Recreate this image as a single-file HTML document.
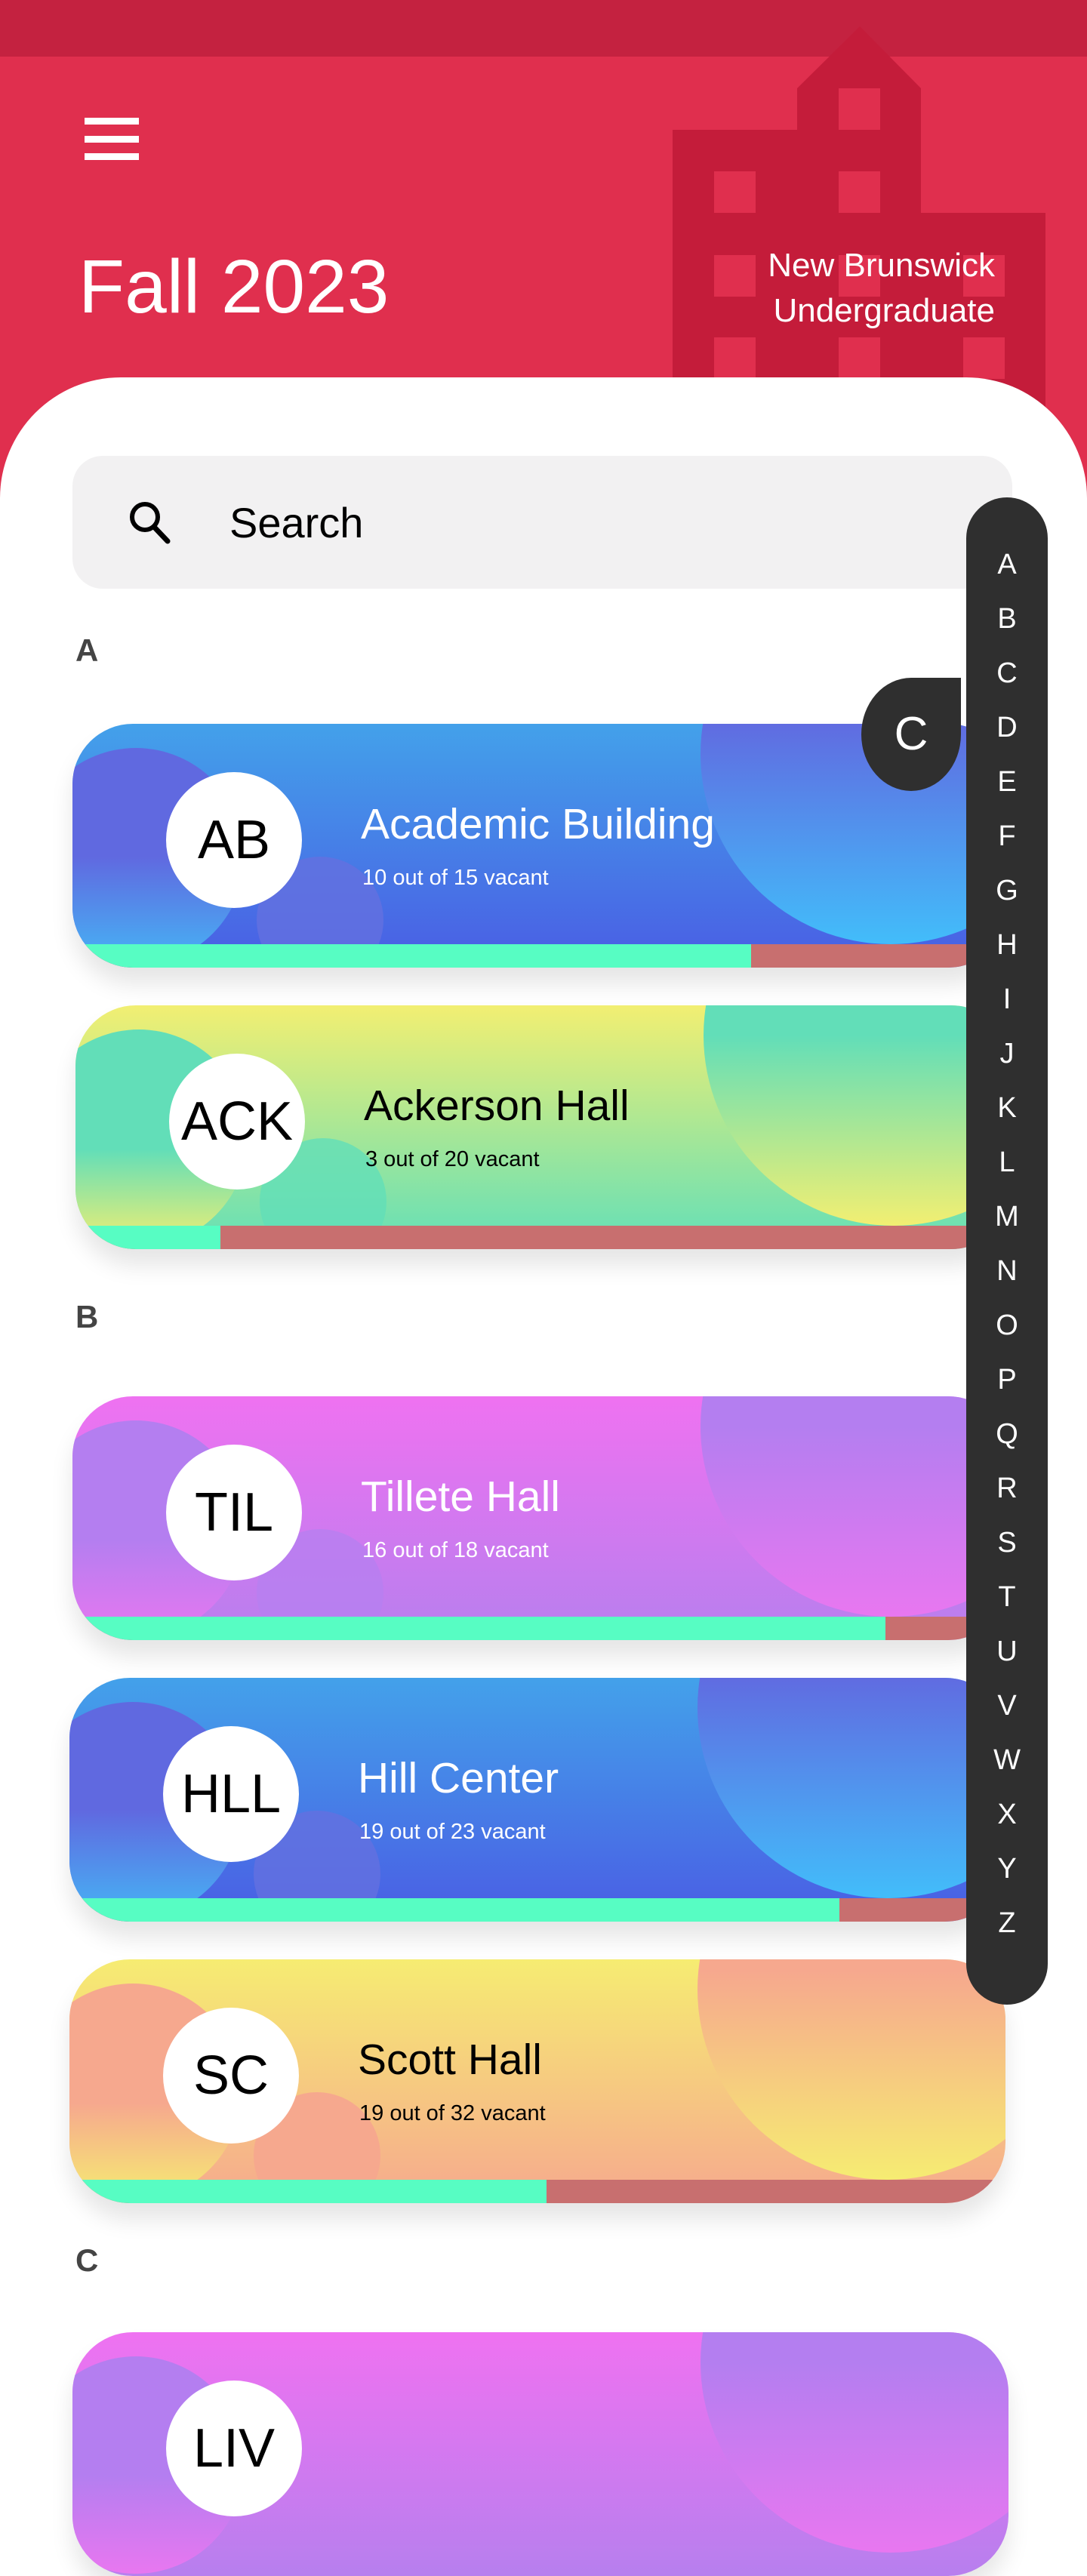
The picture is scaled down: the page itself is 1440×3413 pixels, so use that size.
<!DOCTYPE html>
<html><head><meta charset="utf-8">
<style>
*{margin:0;padding:0;box-sizing:border-box}
html,body{width:1440px;height:3200px;overflow:hidden;background:#fff;font-family:"Liberation Sans",sans-serif}
.abs{position:absolute}
.card{position:absolute;width:1240px;height:323px;border-radius:80px;overflow:hidden;box-shadow:0 22px 30px rgba(0,0,0,0.10)}
.card .c{position:absolute;border-radius:50%}
.card .bar{position:absolute;left:0;right:0;bottom:0;height:31px;background:#c86f6f}
.card .bar i{position:absolute;left:0;top:0;bottom:0;background:#57fdc3}
.av{position:absolute;width:180px;height:180px;border-radius:50%;background:#fff;left:124px;top:64px;text-align:center;line-height:180px;font-size:72px;color:#000}
.t{position:absolute;left:382px;top:100px;font-size:57px;white-space:nowrap}
.s{position:absolute;left:384px;top:188px;font-size:29px;white-space:nowrap}
.sec{position:absolute;left:100px;font-size:42px;font-weight:bold;color:#444}
.alpha{position:absolute;left:1280px;top:659px;width:108px;height:1997px;background:#2f2f2f;border-radius:54px}
.alpha span{position:absolute;left:0;width:108px;text-align:center;color:#fff;font-size:38px;line-height:40px}
</style></head><body>
<!-- header -->
<div class="abs" style="left:0;top:0;width:1440px;height:700px;background:#e02f4e"></div>
<div class="abs" style="left:0;top:0;width:1440px;height:75px;background:#c42240"></div>
<svg class="abs" style="left:0;top:0" width="1440" height="700">
<g fill="#c41c3a">
<polygon points="1056,117 1139,35 1220,117 1220,282 1385,282 1385,700 891,700 891,172 1056,172"/>
</g>
<g fill="#e02f4e">
<rect x="1111" y="117" width="55" height="55"/>
<rect x="946" y="227" width="55" height="55"/>
<rect x="1111" y="227" width="55" height="55"/>
<rect x="946" y="338" width="55" height="55"/>
<rect x="1111" y="338" width="55" height="55"/>
<rect x="1276" y="338" width="55" height="55"/>
<rect x="946" y="447" width="55" height="55"/>
<rect x="1111" y="447" width="55" height="55"/>
<rect x="1276" y="447" width="55" height="55"/>
</g>
<g fill="#fff">
<rect x="112" y="156" width="72" height="9"/>
<rect x="112" y="180" width="72" height="9"/>
<rect x="112" y="203" width="72" height="9"/>
</g>
</svg>
<div class="abs" style="left:104px;top:320px;font-size:100px;color:#fff;line-height:120px">Fall 2023</div>
<div class="abs" style="left:900px;top:322px;width:418px;text-align:right;font-size:44px;line-height:60px;color:#fff">New Brunswick<br>Undergraduate</div>
<!-- white sheet -->
<div class="abs" style="left:0;top:500px;width:1440px;height:2800px;background:#fff;border-radius:160px 160px 0 0"></div>
<!-- search -->
<div class="abs" style="left:96px;top:604px;width:1245px;height:176px;background:#f2f1f2;border-radius:40px"></div>
<svg class="abs" style="left:160px;top:655px" width="80" height="80"><circle cx="32" cy="30" r="17" fill="none" stroke="#000" stroke-width="6"/><line x1="44" y1="43" x2="62" y2="62" stroke="#000" stroke-width="7" stroke-linecap="round"/></svg>
<div class="abs" style="left:304px;top:660px;font-size:56px;color:#000">Search</div>

<div class="sec" style="top:838px">A</div>
<div class="sec" style="top:1721px">B</div>
<div class="sec" style="top:2971px">C</div>

<!-- card 1 -->
<div class="card" style="left:96px;top:959px;background:linear-gradient(#43a1ea,#4a5de4)">
<div class="c" style="left:832px;top:-212px;width:504px;height:504px;background:linear-gradient(#6169e0 40%,#42bdfa)"></div>
<div class="c" style="left:-60px;top:32px;width:288px;height:288px;background:linear-gradient(#6069e0 50%,#45b5f5)"></div>
<div class="c" style="left:244px;top:176px;width:168px;height:168px;background:#6470e0;opacity:.8"></div>
<div class="av">AB</div>
<div class="t" style="color:#fff">Academic Building</div>
<div class="s" style="color:#fff">10 out of 15 vacant</div>
<div class="bar"><i style="width:899px"></i></div>
</div>
<!-- card 2 -->
<div class="card" style="left:100px;top:1332px;background:linear-gradient(#f2ef72,#62dfb8)">
<div class="c" style="left:832px;top:-212px;width:504px;height:504px;background:linear-gradient(#62deb8 50%,#f2ef72)"></div>
<div class="c" style="left:-60px;top:32px;width:288px;height:288px;background:linear-gradient(#62deb8 55%,#f2ef72)"></div>
<div class="c" style="left:244px;top:176px;width:168px;height:168px;background:#62deb8;opacity:.8"></div>
<div class="av">ACK</div>
<div class="t" style="color:#000">Ackerson Hall</div>
<div class="s" style="color:#000">3 out of 20 vacant</div>
<div class="bar"><i style="width:192px"></i></div>
</div>
<!-- card 3 -->
<div class="card" style="left:96px;top:1850px;background:linear-gradient(#ef72f1,#b77fee)">
<div class="c" style="left:832px;top:-212px;width:504px;height:504px;background:linear-gradient(#b47ef0 50%,#e877f0)"></div>
<div class="c" style="left:-60px;top:32px;width:288px;height:288px;background:linear-gradient(#b47ef0 55%,#e877f0)"></div>
<div class="c" style="left:244px;top:176px;width:168px;height:168px;background:#b67ff0;opacity:.8"></div>
<div class="av">TIL</div>
<div class="t" style="color:#fff">Tillete Hall</div>
<div class="s" style="color:#fff">16 out of 18 vacant</div>
<div class="bar"><i style="width:1077px"></i></div>
</div>
<!-- card 4 -->
<div class="card" style="left:92px;top:2223px;background:linear-gradient(#43a1ea,#4a5de4)">
<div class="c" style="left:832px;top:-212px;width:504px;height:504px;background:linear-gradient(#6169e0 40%,#42bdfa)"></div>
<div class="c" style="left:-60px;top:32px;width:288px;height:288px;background:linear-gradient(#6069e0 50%,#45b5f5)"></div>
<div class="c" style="left:244px;top:176px;width:168px;height:168px;background:#6470e0;opacity:.8"></div>
<div class="av">HLL</div>
<div class="t" style="color:#fff">Hill Center</div>
<div class="s" style="color:#fff">19 out of 23 vacant</div>
<div class="bar"><i style="width:1020px"></i></div>
</div>
<!-- card 5 -->
<div class="card" style="left:92px;top:2596px;background:linear-gradient(#f6ec72,#f6a98e)">
<div class="c" style="left:832px;top:-212px;width:504px;height:504px;background:linear-gradient(#f6a88e 45%,#f6ec72)"></div>
<div class="c" style="left:-60px;top:32px;width:288px;height:288px;background:linear-gradient(#f6a88e 55%,#f6ec72)"></div>
<div class="c" style="left:244px;top:176px;width:168px;height:168px;background:#f6a88e"></div>
<div class="av">SC</div>
<div class="t" style="color:#000">Scott Hall</div>
<div class="s" style="color:#000">19 out of 32 vacant</div>
<div class="bar"><i style="width:632px"></i></div>
</div>
<!-- card 6 -->
<div class="card" style="left:96px;top:3090px;background:linear-gradient(#ef72f1,#b77fee)">
<div class="c" style="left:832px;top:-212px;width:504px;height:504px;background:linear-gradient(#b47ef0 50%,#e877f0)"></div>
<div class="c" style="left:-60px;top:32px;width:288px;height:288px;background:linear-gradient(#b47ef0 55%,#e877f0)"></div>
<div class="av">LIV</div>
</div>

<!-- alphabet -->
<div class="alpha">
<span style="top:69px">A</span><span style="top:141px">B</span><span style="top:213px">C</span><span style="top:285px">D</span><span style="top:357px">E</span><span style="top:429px">F</span><span style="top:501px">G</span><span style="top:573px">H</span><span style="top:645px">I</span><span style="top:717px">J</span><span style="top:789px">K</span><span style="top:861px">L</span><span style="top:933px">M</span><span style="top:1005px">N</span><span style="top:1077px">O</span><span style="top:1149px">P</span><span style="top:1221px">Q</span><span style="top:1293px">R</span><span style="top:1365px">S</span><span style="top:1437px">T</span><span style="top:1509px">U</span><span style="top:1581px">V</span><span style="top:1653px">W</span><span style="top:1725px">X</span><span style="top:1797px">Y</span><span style="top:1869px">Z</span>
</div>
<div class="abs" style="left:1141px;top:898px;width:132px;height:150px;background:#2f2f2f;border-radius:66px 0 66px 66px / 75px 0 75px 75px;color:#fff;font-size:62px;text-align:center;line-height:150px">C</div>
</body></html>
